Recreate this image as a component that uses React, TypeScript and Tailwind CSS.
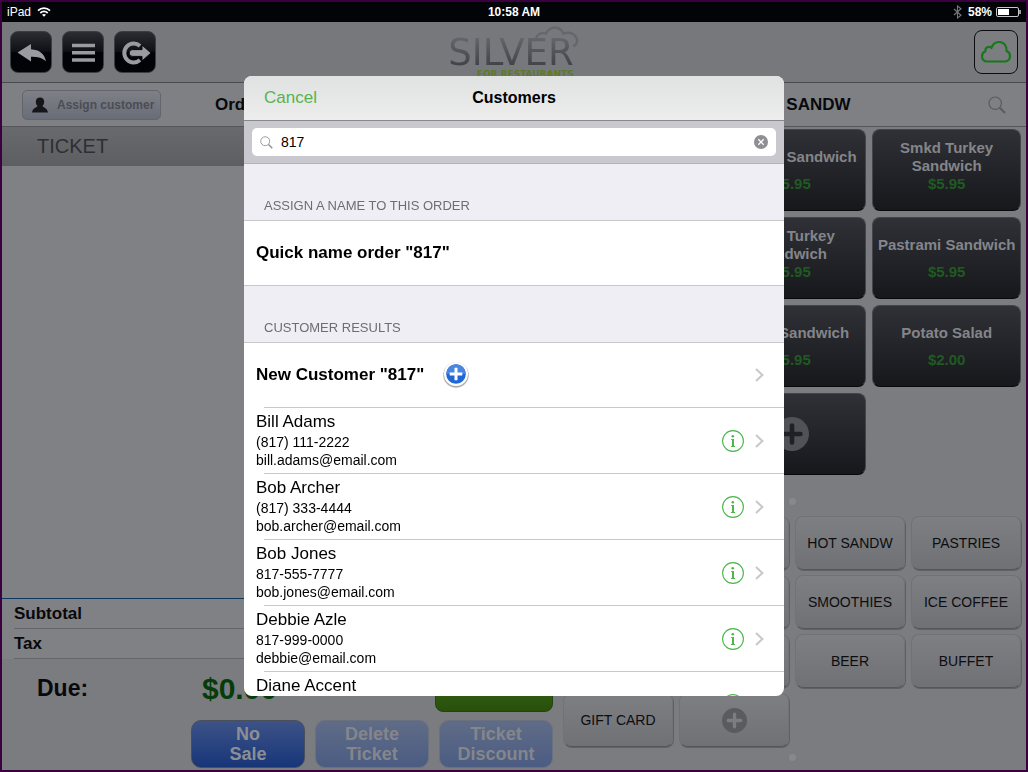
import { useState } from "react";

interface Customer {
    name: string;
    phone: string;
    email: string;
}

interface Product {
    name: string;
    price: string;
}

const customers: Customer[] = [
    { name: "Bill Adams", phone: "(817) 111-2222", email: "bill.adams@email.com" },
    { name: "Bob Archer", phone: "(817) 333-4444", email: "bob.archer@email.com" },
    { name: "Bob Jones", phone: "817-555-7777", email: "bob.jones@email.com" },
    { name: "Debbie Azle", phone: "817-999-0000", email: "debbie@email.com" },
    { name: "Diane Accent", phone: "817-222-1111", email: "diane@email.com" },
];

const products: Product[] = [
    { name: "Club", price: "$5.95" },
    { name: "Reuben Sandwich", price: "$5.95" },
    { name: "Smkd Turkey Sandwich", price: "$5.95" },
    { name: "BLT", price: "$5.95" },
    { name: "Club Turkey Sandwich", price: "$5.95" },
    { name: "Pastrami Sandwich", price: "$5.95" },
    { name: "Veggie", price: "$5.95" },
    { name: "Steak Sandwich", price: "$5.95" },
    { name: "Potato Salad", price: "$2.00" },
    { name: "Chips", price: "$1.00" },
];

const categories = [
    "COFFEE", "COLD SANDW", "HOT SANDW", "PASTRIES",
    "TEA", "SALADS", "SMOOTHIES", "ICE COFFEE",
    "SOUPS", "WINE", "BEER", "BUFFET",
    "GIFT CARD",
];

const SearchIcon = ({ className }: { className: string }) => (
    <svg viewBox="0 0 18 18" className={className} fill="none" stroke="currentColor" aria-hidden="true">
        <circle cx="7.2" cy="7.2" r="6.2" strokeWidth="1.2" />
        <path d="M11.8 11.8 17 17" strokeWidth="2" />
    </svg>
);

const PlusDisc = ({ className, cross }: { className: string; cross: string }) => (
    <svg viewBox="0 0 34 34" className={className} aria-hidden="true">
        <circle cx="17" cy="17" r="17" fill="currentColor" />
        <path d="M17 8.5v17M8.5 17h17" stroke={cross} strokeWidth="4.6" strokeLinecap="round" />
    </svg>
);

const Chevron = () => (
    <svg viewBox="0 0 9 14" className="h-3.5 w-[9px]" fill="none" stroke="#c7c7cc" strokeWidth="2" aria-hidden="true">
        <path d="M1 1l6.4 6L1 13" />
    </svg>
);

const StatusBar = () => (
    <div className="grid h-5 grid-cols-3 items-center bg-[#030408] px-[5px] text-xs text-white">
        <div className="flex items-center gap-1.5">
            <span>iPad</span>
            <svg viewBox="0 0 14 10" className="h-2.5 w-3.5" fill="none" stroke="white" strokeWidth="1.8" aria-hidden="true">
                <path d="M1 3.6C4.4.3 9.600.3 13 3.6" />
                <path d="M3.300 6c2.200-2 5.200-2 7.400 0" />
                <path d="M5 7.700c1.200-1 2.800-1 4 0L7 9.800z" fill="white" stroke="none" />
            </svg>
        </div>
        <span className="text-center font-bold">10:58 AM</span>
        <div className="flex items-center justify-end gap-1">
            <svg viewBox="0 0 9 14" className="mr-0.5 h-3.5 w-[9px]" fill="none" stroke="#77777c" strokeWidth="1.1" aria-hidden="true">
                <path d="M1 4l7 6.300L4.500 13V1L8 3.700 1 10" />
            </svg>
            <span className="font-bold">58%</span>
            <svg viewBox="0 0 25 10" className="h-2.5 w-[25px]" aria-hidden="true">
                <rect x=".5" y=".5" width="22" height="9" rx="1.500" fill="none" stroke="#c8c8cc" />
                <rect x="2" y="2" width="11" height="6" fill="white" />
                <path d="M24 3v4" stroke="#c8c8cc" strokeWidth="1.500" />
            </svg>
        </div>
    </div>
);

const toolButton = "h-[42px] w-[42px] rounded-lg border border-[#3c3d42] bg-linear-to-b from-[#2c2d32] from-0% via-[#101116] via-48% to-[#020307] to-52% text-[#9a9ba0]";

const Toolbar = () => (
    <header className="grid h-[61px] grid-cols-[1fr_auto_1fr] items-center border-b border-[#4a4b50] bg-[#77787c] px-2">
        <div className="flex gap-2.5">
            <button className={toolButton} aria-label="Back">
                <svg viewBox="0 0 40 40" fill="currentColor">
                    <path d="M6.500 20.500 20 12v5.200c8.500.6 13.500 4.600 15 12-3.800-3.400-8.500-4.600-15-4.400V29.500z" />
                </svg>
            </button>
            <button className={toolButton} aria-label="Menu">
                <svg viewBox="0 0 40 40" stroke="currentColor" strokeWidth="3.600">
                    <path d="M9 13.500h23M9 20.800h23M9 28h23" />
                </svg>
            </button>
            <button className={toolButton} aria-label="Sign out">
                <svg viewBox="0 0 40 40" fill="none" stroke="currentColor">
                    <path d="M25 14a9.400 9.400 0 1 0 0 14" strokeWidth="4" />
                    <path d="M17.500 17.600h9.500V13l9 8-9 8v-4.600h-9.500a3 3 0 0 1 0-6.800z" fill="currentColor" stroke="#090a0e" strokeWidth="1" />
                </svg>
            </button>
        </div>
        <div className="relative flex flex-col items-end pt-3 pr-1.5 font-['DejaVu_Sans']">
            <span className="bg-linear-to-b from-[#66676c] to-[#3c3f44] bg-clip-text text-[37px] leading-8 text-transparent">SILVER</span>
            <span className="text-[9px] leading-[10px] font-bold text-[#5d7a26]">FOR RESTAURANTS</span>
            <svg viewBox="0 0 46 24" className="absolute top-0 right-0 h-6 w-[46px]" fill="none" stroke="#66676c" strokeWidth="2.400" aria-hidden="true">
                <path d="M2 13c2-4.500 6-5.500 10-4.500C14 4 19 1.500 23.500 3c3 1 5 3 5.800 5.500 5-1.500 10-.5 12.700 3.500 2 3.500 1 7-2.500 9.500" />
            </svg>
        </div>
        <button className="h-11 w-11 justify-self-end rounded-lg border border-[#0b0c10] bg-[#7c7d81]" aria-label="Cloud sync">
            <svg viewBox="0 0 42 42" fill="none" stroke="#18771d" strokeWidth="2.200">
                <path d="M12 30.500c-3 0-5-2.300-5-5.200 0-2.800 1.500-4.300 3.400-5-.4-4 3.600-5.300 6-3.600C18 13 20.500 11 24 11c5 0 8 4 7.600 9 2.400 1 3.400 3 3.400 5 0 3-2 5.500-5 5.500z" />
            </svg>
        </button>
    </header>
);

const TicketPanel = () => (
    <section className="flex flex-col bg-[#808185]">
        <div className="flex h-11 items-center border-b border-[#55565a] bg-[#7f8084] px-5">
            <button className="flex h-[30px] w-[139px] items-center gap-2 rounded-[5px] border border-[#63656c] bg-linear-to-b from-[#7e8086] to-[#696d78] pl-2 text-xs font-bold text-[#4b4d54]">
                <svg viewBox="0 0 18 16" className="h-4 w-[18px] shrink-0" fill="#15161b" aria-hidden="true">
                    <path d="M9 .5c2.800 0 4.300 2 4.200 4.600-.1 2-.9 3.200-1.700 4 .3 1.400 4.500 1.500 5.500 6.400H1c1-4.900 5.200-5 5.500-6.400-.8-.8-1.600-2-1.700-4C4.700 2.500 6.200.5 9 .5z" />
                </svg>
                <span className="whitespace-nowrap">Assign customer</span>
            </button>
            <h1 className="ml-[54px] text-[17px] font-bold text-[#08090c]">Order</h1>
        </div>
        <h2 className="h-[39px] bg-linear-to-b from-[#696a6e] to-[#5d5e61] pl-[35px] text-xl leading-[39px] text-[#2e2f33]">TICKET</h2>
        <div className="flex-1 border-b border-[#0e3763]" />
        <div className="pl-3 text-[17px] font-bold text-[#08090c]">
            <p className="h-[30px] border-b border-[#64656a] leading-[29px]">Subtotal</p>
            <p className="h-[30px] border-b border-[#64656a] leading-[29px]">Tax</p>
        </div>
        <div className="flex flex-col gap-2 bg-[#7b7c80] pt-[5px] pr-[5px] pb-0.5">
            <div className="flex h-12 items-center pl-[35px] font-bold">
                <span className="w-[165px] text-[23px] text-[#08090c]">Due:</span>
                <span className="text-[30px] text-[#063c0a]">$0.00</span>
                <button className="ml-auto h-12 w-[118px] rounded-lg border border-[#234412] bg-linear-to-b from-[#3d6a1a] to-[#28500b]" aria-label="Pay" />
            </div>
            <div className="flex justify-end gap-2.5 text-lg leading-5 font-bold text-[#85868b]">
                <button className="h-12 w-[114px] rounded-[10px] border border-[#4b4f5c] bg-linear-to-b from-[#3d5387] to-[#173579] px-6 text-[#8d8e93]">No Sale</button>
                <button className="h-12 w-[114px] rounded-[10px] border border-[#69707f] bg-linear-to-b from-[#606c87] to-[#4b5c83] px-6">Delete Ticket</button>
                <button className="h-12 w-[114px] rounded-[10px] border border-[#69707f] bg-linear-to-b from-[#606c87] to-[#4b5c83] px-2">Ticket Discount</button>
            </div>
        </div>
    </section>
);

const productTile = "h-[82px] rounded-lg border border-[#44454a] border-b-[#08090c] bg-linear-to-b from-[#303136] to-[#17181c]";
const categoryTile = "h-[54px] rounded-lg border border-[#717276] border-b-[#55565a] bg-linear-to-b from-[#7e7f83] to-[#707175] shadow-[1px_1px_0_#606165]";

const MenuPanel = () => (
    <section className="flex flex-col bg-[#7b7c80]">
        <div className="grid h-11 grid-cols-[1fr_auto_1fr] items-center border-b border-[#55565a] bg-[#7f8084] px-5">
            <h2 className="col-start-2 text-[17px] font-bold text-[#08090c]">COLD SANDW</h2>
            <button className="justify-self-end text-[#5a5b60]" aria-label="Search menu">
                <SearchIcon className="h-[18px] w-[18px]" />
            </button>
        </div>
        <div className="grid grid-cols-3 gap-1.5 px-[5px] pt-0.5">
            {products.map((product) => (
                <button key={product.name} className={`${productTile} pb-2 text-[15px] leading-[18px] font-bold`}>
                    <span className="flex h-9 items-center justify-center text-[#84858a]">
                        {product.name.length > 17 ? <span className="w-24">{product.name}</span> : <span className="whitespace-nowrap">{product.name}</span>}
                    </span>
                    <span className="block text-[#205a22]">{product.price}</span>
                </button>
            ))}
            <button className={`${productTile} flex items-center justify-center`} aria-label="Add item">
                <PlusDisc className="h-[34px] w-[34px] text-[#515257]" cross="#202126" />
            </button>
        </div>
        <span className="mt-[23px] h-[7px] w-[7px] self-center rounded-full bg-[#88898e]" />
        <div className="mt-[11px] grid grid-cols-4 gap-x-1.5 gap-y-[5px] px-[5px]">
            {categories.map((category) => (
                <button key={category} className={`${categoryTile} text-sm whitespace-nowrap text-[#0c0d10]`}>{category}</button>
            ))}
            <button className={`${categoryTile} flex items-center justify-center`} aria-label="Add category">
                <PlusDisc className="h-[25px] w-[25px] text-[#5a5b5f]" cross="#7c7d82" />
            </button>
        </div>
        <span className="mt-[7px] h-[7px] w-[7px] self-center rounded-full bg-[#88898e]" />
    </section>
);

const CustomerRow = ({ customer }: { customer: Customer }) => (
    <li className="relative flex h-[66px] items-center pr-5 pl-3 after:absolute after:right-0 after:bottom-0 after:left-5 after:h-px after:bg-[#c8c7cc]">
        <button className="h-full flex-1 pb-0.5 text-left text-sm leading-[18px]">
            <span className="block text-[17px] leading-[22px]">{customer.name}</span>
            <span className="block">{customer.phone}</span>
            <span className="block">{customer.email}</span>
        </button>
        <button className="mr-[11px]" aria-label={`Details for ${customer.name}`}>
            <svg viewBox="0 0 22 22" className="h-[22px] w-[22px]" fill="none" stroke="#4cb648">
                <circle cx="11" cy="11" r="10.400" strokeWidth="1.100" />
                <circle cx="10.800" cy="6.200" r="1.300" fill="#4cb648" stroke="none" />
                <path d="M9.200 9.500h1.900M9 16.500h4" strokeWidth="1" />
                <path d="M11 9v7.500" strokeWidth="2" />
            </svg>
        </button>
        <Chevron />
    </li>
);

const sectionTitle = "h-[57px] shrink-0 border-b border-[#c8c7cc] bg-[#efeef4] pt-[33px] pl-5 text-[13px] leading-[18px] text-[#6d6d72]";

const CustomersDialog = () => {
    const [search, setSearch] = useState("817");

    return (
        <div role="dialog" aria-label="Customers" className="flex h-[620px] w-[540px] flex-col overflow-hidden rounded-lg bg-white text-black">
            <div className="grid h-[45px] shrink-0 grid-cols-3 items-center border-b border-[#88898b] bg-linear-to-b from-[#e0e1e1] to-[#ecedec] px-5 text-[17px]">
                <button className="justify-self-start text-[#56b450]">Cancel</button>
                <h2 className="text-center text-base font-bold">Customers</h2>
            </div>
            <div className="h-[43px] shrink-0 border-b border-[#b2b2b7] bg-[#c9c8ce] px-2 pt-[7px]">
                <label className="flex h-7 items-center gap-2 rounded-[5px] bg-white px-2">
                    <SearchIcon className="h-[13px] w-[13px] text-[#8e8e93]" />
                    <input
                        type="text"
                        aria-label="Search customers"
                        value={search}
                        onChange={(e) => setSearch(e.target.value)}
                        className="min-w-0 flex-1 bg-transparent text-sm outline-none"
                    />
                    <button aria-label="Clear search" onClick={() => setSearch("")}>
                        <svg viewBox="0 0 14 14" className="h-3.5 w-3.5">
                            <circle cx="7" cy="7" r="7" fill="#8e8e93" />
                            <path d="M4.300 4.300l5.400 5.400M9.700 4.300 4.300 9.700" stroke="white" strokeWidth="1.300" />
                        </svg>
                    </button>
                </label>
            </div>
            <h3 className={sectionTitle}>ASSIGN A NAME TO THIS ORDER</h3>
            <button className="h-[65px] shrink-0 border-b border-[#c8c7cc] pl-3 text-left text-[17px] font-bold">Quick name order "{search}"</button>
            <h3 className={sectionTitle}>CUSTOMER RESULTS</h3>
            <ul className="min-h-0 flex-1 overflow-hidden">
                <li className="relative h-[65px] after:absolute after:right-0 after:bottom-0 after:left-5 after:h-px after:bg-[#c8c7cc]">
                    <button className="flex h-full w-full items-center pr-5 pb-0.5 pl-3 text-left text-[17px] font-bold">
                        <span>New Customer "{search}"</span>
                        <svg viewBox="0 0 28 28" className="ml-[18px] h-7 w-7" aria-hidden="true">
                            <circle cx="14" cy="14" r="13" fill="#000" opacity=".12" />
                            <circle cx="14" cy="14" r="12.500" fill="#000" opacity=".25" />
                            <circle cx="14" cy="13" r="12" fill="#fff" />
                            <circle cx="14" cy="13" r="9.800" fill="#1f66d8" />
                            <path d="M4.200 13a9.800 9.800 0 0 1 19.600 0z" fill="#4a86e0" />
                            <path d="M14 6.700v12.600M7.700 13h12.600" stroke="#fff" strokeWidth="3" />
                        </svg>
                        <span className="ml-auto"><Chevron /></span>
                    </button>
                </li>
                {customers.map((customer) => (
                    <CustomerRow key={customer.email} customer={customer} />
                ))}
            </ul>
        </div>
    );
};

const App = () => (
    <div className="flex min-h-screen flex-col border-2 border-[#3b0040] bg-[#7b7c80] font-['Liberation_Sans',Arial,sans-serif]">
        <StatusBar />
        <Toolbar />
        <main className="grid flex-1 grid-cols-[139fr_117fr]">
            <TicketPanel />
            <MenuPanel />
        </main>
        <div className="fixed inset-0 flex items-center justify-center">
            <CustomersDialog />
        </div>
    </div>
);

export default App;
